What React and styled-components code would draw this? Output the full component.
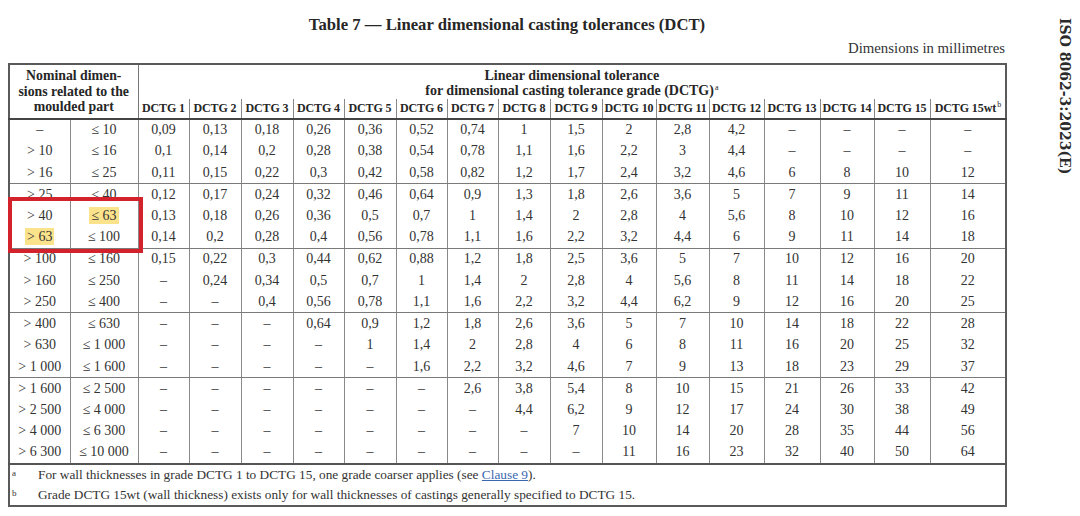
import React from "react";
import styled, { createGlobalStyle } from "styled-components";

const GlobalStyle = createGlobalStyle`
  html, body { margin: 0; padding: 0; background: #fff; }
  body {
    font-family: "Liberation Serif", "Times New Roman", serif;
    color: #2b2b2b;
  }
`;

const Page = styled.div`
  width: 1080px;
  height: 516px;
  overflow: hidden;
  display: flex;
  box-sizing: border-box;
  padding-left: 8px;
  background: #fff;
`;

const Main = styled.div`
  width: 998px;
  display: flex;
  flex-direction: column;
`;

const Title = styled.h1`
  margin: 15px 0 0;
  font-size: 16.7px;
  line-height: 20px;
  font-weight: bold;
  text-align: center;
  color: #262626;
`;

const Units = styled.div`
  margin-top: 5px;
  text-align: right;
  font-size: 14.8px;
  line-height: 16px;
  padding-right: 1px;
  color: #333;
`;

const Side = styled.aside`
  flex: 1;
  display: flex;
  justify-content: flex-start;
  padding-top: 18px;
  padding-left: 51px;
`;

const IsoLabel = styled.div`
  writing-mode: vertical-rl;
  font-family: "DejaVu Serif", serif;
  font-weight: bold;
  font-size: 14px;
  line-height: 16px;
  color: #2a2a2a;
`;

const TableWrap = styled.div`
  position: relative;
  margin-top: 7px;
`;

const Table = styled.table`
  width: 998px;
  table-layout: fixed;
  border-collapse: collapse;
  border: 2px solid #5a5a5a;
`;

const HeadRow = styled.tr`
  height: ${(p) => p.$h}px;
`;

const NominalHead = styled.th`
  font-size: 13.8px;
  line-height: 15.5px;
  font-weight: bold;
  text-align: center;
  vertical-align: middle;
  padding: 0 1px;
  border-right: 1px solid #777;
  border-bottom: 2px solid #444;
  color: #262626;
`;

const GroupHead = styled.th`
  font-size: 14px;
  line-height: 15.5px;
  font-weight: bold;
  text-align: center;
  vertical-align: middle;
  padding: 2px 0 0;
  color: #262626;
`;

const GradeHead = styled.th`
  font-size: 12px;
  font-weight: bold;
  text-align: center;
  vertical-align: middle;
  padding: 0;
  white-space: nowrap;
  letter-spacing: -0.1px;
  border-left: 1px solid #888;
  border-bottom: 2px solid #444;
  color: #262626;
`;

const Sup = styled.sup`
  font-size: 8px;
  font-weight: normal;
  vertical-align: 5px;
  line-height: 0;
  margin-left: 1px;
`;

const BodyRow = styled.tr`
  height: 21.55px;
  ${(p) => p.$groupEnd && `& > td { border-bottom: 1px solid #7a7a7a; }`}
  ${(p) => p.$last && `& > td { border-bottom: 2px solid #555; }`}
`;

const Cell = styled.td`
  font-size: 14px;
  line-height: 16px;
  text-align: center;
  vertical-align: middle;
  padding: 0;
  white-space: nowrap;
  border-left: ${(p) => (p.$first ? "none" : "1px solid #8a8a8a")};
  color: #333;
`;

const Mark = styled.span`
  background: #fbe38c;
  padding: 1px 2px;
`;

const NoteRow = styled.tr`
  height: 21px;
`;

const NoteCell = styled.td`
  padding: 0;
  vertical-align: middle;
`;

const Note = styled.div`
  display: flex;
  align-items: flex-start;
  font-size: 13.3px;
  line-height: 16px;
  color: #333;
`;

const NoteKey = styled.span`
  width: 26px;
  padding-left: 2px;
  font-size: 9px;
  line-height: 12px;
  flex: none;
`;

const ClauseLink = styled.a`
  color: #3a68b0;
  text-decoration: underline;
`;

const Highlight = styled.div`
  position: absolute;
  left: 0;
  top: 134px;
  width: 135px;
  height: 56px;
  box-sizing: border-box;
  border: 4px solid #d3222c;
  pointer-events: none;
`;

const widths = [61, 68, 51, 52, 52, 51, 52, 51, 51, 52, 52, 54, 53, 55, 56, 54, 56, 76];

const D = "–";
const rows = [
  [D, "≤ 10", "0,09 0,13 0,18 0,26 0,36 0,52 0,74 1 1,5 2 2,8 4,2 – – – –"],
  ["> 10", "≤ 16", "0,1 0,14 0,2 0,28 0,38 0,54 0,78 1,1 1,6 2,2 3 4,4 – – – –"],
  ["> 16", "≤ 25", "0,11 0,15 0,22 0,3 0,42 0,58 0,82 1,2 1,7 2,4 3,2 4,6 6 8 10 12"],
  ["> 25", "≤ 40", "0,12 0,17 0,24 0,32 0,46 0,64 0,9 1,3 1,8 2,6 3,6 5 7 9 11 14"],
  ["> 40", "≤ 63", "0,13 0,18 0,26 0,36 0,5 0,7 1 1,4 2 2,8 4 5,6 8 10 12 16"],
  ["> 63", "≤ 100", "0,14 0,2 0,28 0,4 0,56 0,78 1,1 1,6 2,2 3,2 4,4 6 9 11 14 18"],
  ["> 100", "≤ 160", "0,15 0,22 0,3 0,44 0,62 0,88 1,2 1,8 2,5 3,6 5 7 10 12 16 20"],
  ["> 160", "≤ 250", "– 0,24 0,34 0,5 0,7 1 1,4 2 2,8 4 5,6 8 11 14 18 22"],
  ["> 250", "≤ 400", "– – 0,4 0,56 0,78 1,1 1,6 2,2 3,2 4,4 6,2 9 12 16 20 25"],
  ["> 400", "≤ 630", "– – – 0,64 0,9 1,2 1,8 2,6 3,6 5 7 10 14 18 22 28"],
  ["> 630", "≤ 1 000", "– – – – 1 1,4 2 2,8 4 6 8 11 16 20 25 32"],
  ["> 1 000", "≤ 1 600", "– – – – – 1,6 2,2 3,2 4,6 7 9 13 18 23 29 37"],
  ["> 1 600", "≤ 2 500", "– – – – – – 2,6 3,8 5,4 8 10 15 21 26 33 42"],
  ["> 2 500", "≤ 4 000", "– – – – – – – 4,4 6,2 9 12 17 24 30 38 49"],
  ["> 4 000", "≤ 6 300", "– – – – – – – – 7 10 14 20 28 35 44 56"],
  ["> 6 300", "≤ 10 000", "– – – – – – – – – 11 16 23 32 40 50 64"],
];

const grades = Array.from({ length: 15 }, (_, i) => `DCTG ${i + 1}`);
const groupEnds = [2, 5, 8, 11];
const marked = { "4-1": true, "5-0": true };

export default function App() {
  return (
    <>
      <GlobalStyle />
      <Page>
        <Main>
          <Title>Table 7 — Linear dimensional casting tolerances (DCT)</Title>
          <Units>Dimensions in millimetres</Units>
          <TableWrap>
            <Table>
              <colgroup>
                {widths.map((w, i) => (
                  <col key={i} style={{ width: w }} />
                ))}
              </colgroup>
              <thead>
                <HeadRow $h={35}>
                  <NominalHead colSpan={2} rowSpan={2}>
                    Nominal dimen-
                    <br />
                    sions related to the
                    <br />
                    moulded part
                  </NominalHead>
                  <GroupHead colSpan={16}>
                    Linear dimensional tolerance
                    <br />
                    for dimensional casting tolerance grade (DCTG)
                    <Sup>a</Sup>
                  </GroupHead>
                </HeadRow>
                <HeadRow $h={20}>
                  {grades.map((g) => (
                    <GradeHead key={g}>{g}</GradeHead>
                  ))}
                  <GradeHead>
                    DCTG 15wt<Sup>b</Sup>
                  </GradeHead>
                </HeadRow>
              </thead>
              <tbody>
                {rows.map(([from, to, vals], r) => (
                  <BodyRow
                    key={r}
                    $groupEnd={groupEnds.includes(r)}
                    $last={r === rows.length - 1}
                  >
                    <Cell $first>{marked[`${r}-0`] ? <Mark>{from}</Mark> : from}</Cell>
                    <Cell>{marked[`${r}-1`] ? <Mark>{to}</Mark> : to}</Cell>
                    {vals.split(" ").map((v, c) => (
                      <Cell key={c}>{v}</Cell>
                    ))}
                  </BodyRow>
                ))}
                <NoteRow>
                  <NoteCell colSpan={18}>
                    <Note>
                      <NoteKey>a</NoteKey>
                      <span>
                        For wall thicknesses in grade DCTG 1 to DCTG 15, one grade coarser applies (see{" "}
                        <ClauseLink href="#clause-9">Clause 9</ClauseLink>).
                      </span>
                    </Note>
                  </NoteCell>
                </NoteRow>
                <NoteRow>
                  <NoteCell colSpan={18}>
                    <Note>
                      <NoteKey>b</NoteKey>
                      <span>
                        Grade DCTG 15wt (wall thickness) exists only for wall thicknesses of castings generally
                        specified to DCTG 15.
                      </span>
                    </Note>
                  </NoteCell>
                </NoteRow>
              </tbody>
            </Table>
            <Highlight />
          </TableWrap>
        </Main>
        <Side>
          <IsoLabel>ISO 8062-3:2023(E)</IsoLabel>
        </Side>
      </Page>
    </>
  );
}
